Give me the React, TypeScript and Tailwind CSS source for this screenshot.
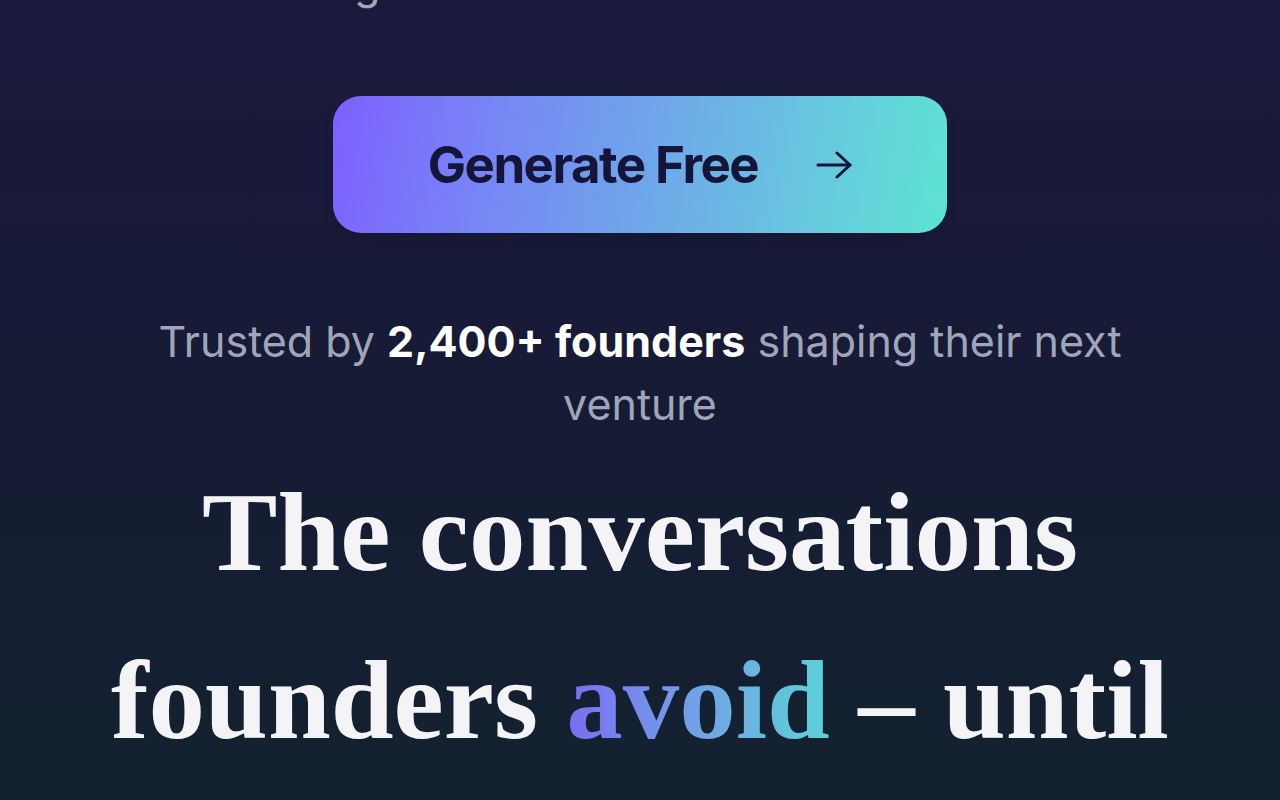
import React from 'react';

const sans = { fontFamily: 'Inter, "Noto Sans", sans-serif' };
const serif = { fontFamily: '"Liberation Serif", "DejaVu Serif", serif' };

const ArrowIcon = () => (
  <svg width="36" height="30" viewBox="0 0 36 30" fill="none" stroke="currentColor" strokeWidth="3" strokeLinecap="round" strokeLinejoin="round">
    <path d="M2 15H34" />
    <path d="M21 3L34 15L21 27" />
  </svg>
);

export default function App() {
  return (
    <div
      className="h-[800px] w-full overflow-hidden flex flex-col items-center bg-linear-to-b from-[#1b1a3d] via-[#161b35] to-[#13222f]"
      style={sans}
    >
      <p className="shrink-0 -mt-[48px] text-[43px] leading-[63px] text-[#a3a6bd] whitespace-nowrap">
        a guide to honest structure now
      </p>

      <button className="shrink-0 mt-[81px] h-[137px] w-[614px] rounded-[28px] bg-linear-100 from-[#7d5fff] via-[#6fa4ea] to-[#5de4d2] flex items-center justify-center gap-[58px] text-[#15153a] shadow-lg">
        <span className="text-[51px] font-bold tracking-[-0.03em] translate-y-[1px]">Generate Free</span>
        <ArrowIcon />
      </button>

      <p className="shrink-0 mt-[77px] max-w-[1000px] text-center text-[43px] leading-[63px] text-[#a0a5b9]">
        Trusted by <span className="font-bold text-white">2,400+ founders</span> shaping their next venture
      </p>

      <h1
        className="shrink-0 mt-[12px] text-center text-[113px] leading-[168px] font-bold text-[#f4f4f6]"
        style={serif}
      >
        The conversations
        <br />
        founders{' '}
        <span className="bg-linear-to-r from-[#7b6cf2] to-[#5ad2d6] bg-clip-text text-transparent">avoid</span>{' '}
        – until
        <br />
        it's too late
      </h1>
    </div>
  );
}
